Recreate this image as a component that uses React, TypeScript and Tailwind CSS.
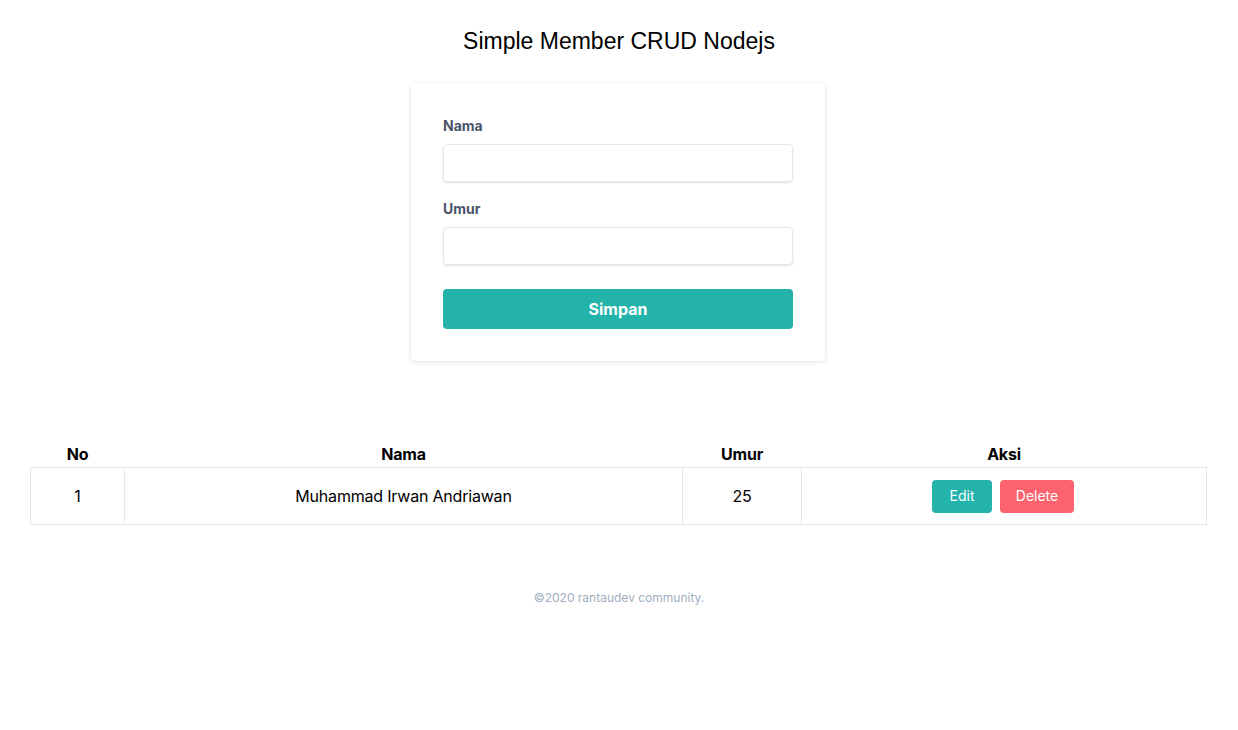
const MEMBERS = [{ no: 1, nama: 'Muhammad Irwan Andriawan', umur: 25 }];

export default function App() {
    return (
        <div className="min-h-screen bg-white font-['Inter',sans-serif] text-black">
            <h1 className="pt-[25px] text-center font-['Liberation_Sans',Arial,sans-serif] text-[23px] leading-8 font-normal">
                Simple Member CRUD Nodejs
            </h1>

            <form className="mx-auto mt-[26px] w-[414px] -translate-x-px rounded bg-white px-8 pt-[33px] pb-8 shadow-[0_1px_4px_rgba(0,0,0,0.12)]">
                <label className="mb-2 block text-sm font-bold text-[#4a5568]">Nama</label>
                <input
                    type="text"
                    className="block h-[38px] w-full rounded border border-[#e2e8f0] shadow-[0_1px_2px_rgba(0,0,0,0.12)] outline-none"
                />
                <label className="mt-[17px] mb-2 block text-sm font-bold text-[#4a5568]">Umur</label>
                <input
                    type="text"
                    className="block h-[38px] w-full rounded border border-[#e2e8f0] shadow-[0_1px_2px_rgba(0,0,0,0.12)] outline-none"
                />
                <button
                    type="button"
                    className="mt-6 block h-10 w-full rounded bg-[#23b3ab] text-base font-bold text-white"
                >
                    Simpan
                </button>
            </form>

            <div className="mt-[81px] pr-[31px] pl-[30px]">
                <table className="w-full border-collapse text-base tracking-[-0.2px]">
                    <thead>
                        <tr>
                            <th className="w-[94px] pb-px font-bold">No</th>
                            <th className="w-[558px] pb-px font-bold">Nama</th>
                            <th className="w-[119px] pb-px font-bold">Umur</th>
                            <th className="pb-px font-bold">Aksi</th>
                        </tr>
                    </thead>
                    <tbody>
                        {MEMBERS.map((m) => (
                            <tr key={m.no}>
                                <td className="h-[57px] border border-[#e2e8f0] text-center">{m.no}</td>
                                <td className="border border-[#e2e8f0] text-center">{m.nama}</td>
                                <td className="border border-[#e2e8f0] text-center">{m.umur}</td>
                                <td className="border border-[#e2e8f0] text-center">
                                    <div className="flex items-center justify-center gap-2 pr-[2px]">
                                        <button
                                            type="button"
                                            className="h-[33px] w-[60px] rounded bg-[#23b3ab] text-sm tracking-normal text-white"
                                        >
                                            Edit
                                        </button>
                                        <button
                                            type="button"
                                            className="h-[33px] w-[74px] rounded bg-[#fc636e] text-sm tracking-normal text-white"
                                        >
                                            Delete
                                        </button>
                                    </div>
                                </td>
                            </tr>
                        ))}
                    </tbody>
                </table>
            </div>

            <p className="mt-[65px] text-center text-xs text-[#a0aec0]">©2020 rantaudev community.</p>
        </div>
    );
}
